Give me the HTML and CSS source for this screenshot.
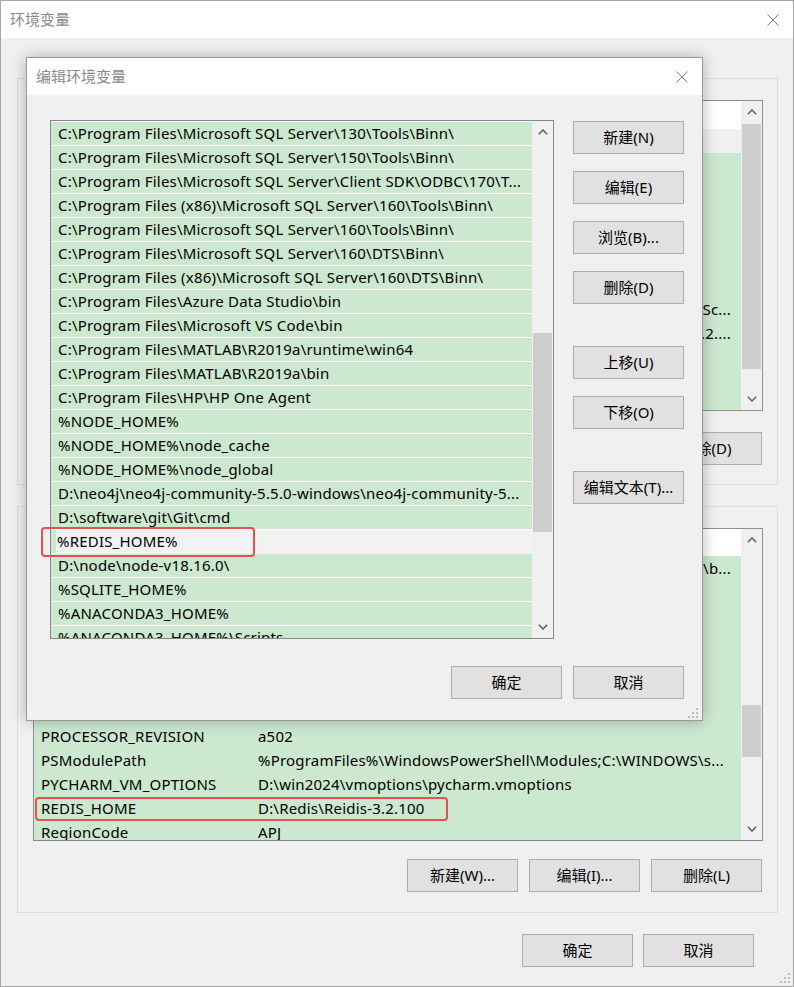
FILE: index.html
```html
<!DOCTYPE html>
<html lang="zh-CN">
<head>
<meta charset="utf-8">
<title>环境变量</title>
<link rel="stylesheet" href="styles.css">
</head>
<body>
<div class="win">
  <header class="titlebar">
    <span class="title">环境变量</span>
    <svg class="close" viewBox="0 0 12 12"><path d="M0.5 0.5L11.5 11.5M11.5 0.5L0.5 11.5"/></svg>
  </header>

  <main class="content">
    <section class="group">
      <div class="listview lv-user">
        <div class="lv-main">
          <div class="lv-head"><span>变量</span><span>值</span></div>
          <div class="lv-row sel"><span class="k">IntelliJ IDEA</span><span class="v">D:\IntelliJ IDEA 2023.2\bin;</span></div>
          <div class="lv-row"><span class="k">MOZ_PLUGIN_PATH</span><span class="v">C:\Program Files (x86)\Foxit\plugins\</span></div>
          <div class="lv-row"><span class="k">OneDrive</span><span class="v">C:\Users\HP\OneDrive</span></div>
          <div class="lv-row"><span class="k">OneDriveConsumer</span><span class="v">C:\Users\HP\OneDrive</span></div>
          <div class="lv-row"><span class="k">Path</span><span class="v">C:\Users\HP\AppData\Local\Microsoft\WindowsApps;</span></div>
          <div class="lv-row"><span class="k">PyCharm</span><span class="v">D:\PyCharm 2023.2\bin;</span></div>
          <div class="lv-row"><span class="k">PyCharm Community Edition</span><span class="v">D:\PyCharm CE 2023.2\bin;</span></div>
          <div class="lv-row"><span class="k">PYTHONPATH</span><span class="v tail">D:\Anaconda3;D:\Anaconda3\Library\bin;D:\Anaconda3\Sc...</span></div>
          <div class="lv-row"><span class="k">WebStorm</span><span class="v tail">D:\Program Files\JetBrains\WebStorm 2023.2....</span></div>
          <div class="lv-row"><span class="k">TEMP</span><span class="v">%USERPROFILE%\AppData\Local\Temp</span></div>
          <div class="lv-row"><span class="k">TMP</span><span class="v">%USERPROFILE%\AppData\Local\Temp</span></div>
          <div class="lv-row"><span class="k">ZES_ENABLE_SYSMAN</span><span class="v">1</span></div>
        </div>
        <div class="vscroll">
          <div class="sb-btn"><svg class="chev" viewBox="0 0 10 6"><polyline points="0.8,5.2 5,1 9.2,5.2"/></svg></div>
          <div class="sb-track"><div class="sb-thumb" style="margin-top:1px;height:245px"></div></div>
          <div class="sb-btn"><svg class="chev" viewBox="0 0 10 6"><polyline points="0.8,0.8 5,5 9.2,0.8"/></svg></div>
        </div>
      </div>
      <div class="btnrow">
        <button class="btn">新建(N)...</button>
        <button class="btn">编辑(E)...</button>
        <button class="btn">删除(D)</button>
      </div>
    </section>

    <section class="group">
      <div class="listview lv-sys">
        <div class="lv-main">
          <div class="lv-head"><span>变量</span><span>值</span></div>
          <div class="lv-row"><span class="k">NEO4J_HOME</span><span class="v tail">D:\neo4j\neo4j-community-5.5.0-windows\neo4j-5\b...</span></div>
          <div class="lv-row"><span class="k">NUMBER_OF_PROCESSORS</span><span class="v">16</span></div>
          <div class="lv-row"><span class="k">OS</span><span class="v">Windows_NT</span></div>
          <div class="lv-row"><span class="k">PATHEXT</span><span class="v">.COM;.EXE;.BAT;.CMD;.VBS;.JS;.WSF;.MSC</span></div>
          <div class="lv-row"><span class="k">PROCESSOR_ARCHITECTURE</span><span class="v">AMD64</span></div>
          <div class="lv-row"><span class="k">PROCESSOR_IDENTIFIER</span><span class="v">AMD64 Family 25 Model 80, AuthenticAMD</span></div>
          <div class="lv-row"><span class="k">PROCESSOR_LEVEL</span><span class="v">25</span></div>
          <div class="lv-row"><span class="k">PROCESSOR_REVISION</span><span class="v">a502</span></div>
          <div class="lv-row"><span class="k">PSModulePath</span><span class="v">%ProgramFiles%\WindowsPowerShell\Modules;C:\WINDOWS\s...</span></div>
          <div class="lv-row"><span class="k">PYCHARM_VM_OPTIONS</span><span class="v">D:\win2024\vmoptions\pycharm.vmoptions</span></div>
          <div class="lv-row"><span class="k">REDIS_HOME</span><span class="v">D:\Redis\Reidis-3.2.100</span></div>
          <div class="lv-row"><span class="k">RegionCode</span><span class="v">APJ</span></div>
        </div>
        <div class="vscroll">
          <div class="sb-btn"><svg class="chev" viewBox="0 0 10 6"><polyline points="0.8,5.2 5,1 9.2,5.2"/></svg></div>
          <div class="sb-track"><div class="sb-thumb" style="margin-top:154px;height:52px"></div></div>
          <div class="sb-btn"><svg class="chev" viewBox="0 0 10 6"><polyline points="0.8,0.8 5,5 9.2,0.8"/></svg></div>
        </div>
      </div>
      <div class="btnrow btnrow-sys">
        <button class="btn">新建(W)...</button>
        <button class="btn">编辑(I)...</button>
        <button class="btn">删除(L)</button>
      </div>
    </section>

    <div class="btnrow footer">
      <button class="btn">确定</button>
      <button class="btn">取消</button>
    </div>
  </main>

  <svg class="grip grip-win" viewBox="0 0 11 11"><rect x="8" y="0" width="2" height="2"/><rect x="4" y="4" width="2" height="2"/><rect x="8" y="4" width="2" height="2"/><rect x="0" y="8" width="2" height="2"/><rect x="4" y="8" width="2" height="2"/><rect x="8" y="8" width="2" height="2"/></svg>
  <div class="annot annot-sys"></div>

  <div class="dialog">
    <header class="dlg-title">
      <span class="title">编辑环境变量</span>
      <svg class="close" viewBox="0 0 12 12"><path d="M0.5 0.5L11.5 11.5M11.5 0.5L0.5 11.5"/></svg>
    </header>
    <div class="dlg-body">
      <div class="dlg-main">
        <div class="pathlist">
          <div class="pl-rows">
            <div class="pl-row">C:\Program Files\Microsoft SQL Server\130\Tools\Binn\</div>
            <div class="pl-row">C:\Program Files\Microsoft SQL Server\150\Tools\Binn\</div>
            <div class="pl-row">C:\Program Files\Microsoft SQL Server\Client SDK\ODBC\170\T...</div>
            <div class="pl-row">C:\Program Files (x86)\Microsoft SQL Server\160\Tools\Binn\</div>
            <div class="pl-row">C:\Program Files\Microsoft SQL Server\160\Tools\Binn\</div>
            <div class="pl-row">C:\Program Files\Microsoft SQL Server\160\DTS\Binn\</div>
            <div class="pl-row">C:\Program Files (x86)\Microsoft SQL Server\160\DTS\Binn\</div>
            <div class="pl-row">C:\Program Files\Azure Data Studio\bin</div>
            <div class="pl-row">C:\Program Files\Microsoft VS Code\bin</div>
            <div class="pl-row">C:\Program Files\MATLAB\R2019a\runtime\win64</div>
            <div class="pl-row">C:\Program Files\MATLAB\R2019a\bin</div>
            <div class="pl-row">C:\Program Files\HP\HP One Agent</div>
            <div class="pl-row">%NODE_HOME%</div>
            <div class="pl-row">%NODE_HOME%\node_cache</div>
            <div class="pl-row">%NODE_HOME%\node_global</div>
            <div class="pl-row">D:\neo4j\neo4j-community-5.5.0-windows\neo4j-community-5...</div>
            <div class="pl-row">D:\software\git\Git\cmd</div>
            <div class="pl-row editing">%REDIS_HOME%</div>
            <div class="pl-row">D:\node\node-v18.16.0\</div>
            <div class="pl-row">%SQLITE_HOME%</div>
            <div class="pl-row">%ANACONDA3_HOME%</div>
            <div class="pl-row">%ANACONDA3_HOME%\Scripts</div>
          </div>
          <div class="vscroll">
            <div class="sb-btn"><svg class="chev" viewBox="0 0 10 6"><polyline points="0.8,5.2 5,1 9.2,5.2"/></svg></div>
            <div class="sb-track"><div class="sb-thumb" style="margin-top:190px;height:199px"></div></div>
            <div class="sb-btn"><svg class="chev" viewBox="0 0 10 6"><polyline points="0.8,0.8 5,5 9.2,0.8"/></svg></div>
          </div>
        </div>
        <div class="side">
          <button class="btn">新建(N)</button>
          <button class="btn">编辑(E)</button>
          <button class="btn">浏览(B)...</button>
          <button class="btn">删除(D)</button>
          <button class="btn sep">上移(U)</button>
          <button class="btn">下移(O)</button>
          <button class="btn sep">编辑文本(T)...</button>
        </div>
      </div>
      <div class="btnrow dlg-foot">
        <button class="btn">确定</button>
        <button class="btn">取消</button>
      </div>
    </div>
    <svg class="grip grip-dlg" viewBox="0 0 11 11"><rect x="8" y="0" width="2" height="2"/><rect x="4" y="4" width="2" height="2"/><rect x="8" y="4" width="2" height="2"/><rect x="0" y="8" width="2" height="2"/><rect x="4" y="8" width="2" height="2"/><rect x="8" y="8" width="2" height="2"/></svg>
    <div class="annot annot-dlg"></div>
  </div>
</div>
</body>
</html>
```

FILE: styles.css
```css
* { box-sizing: border-box; }

html, body { margin: 0; padding: 0; }

body {
  font-family: "Noto Sans", "Noto Sans CJK SC", sans-serif;
  font-size: 15px;
  color: #000;
  background: #f0f0f0;
}

.win {
  position: relative;
  width: 794px;
  height: 987px;
  border: 1px solid #a6a6a6;
  background: #f0f0f0;
  overflow: hidden;
}

.titlebar {
  height: 37px;
  background: #fff;
  display: flex;
  align-items: center;
  padding: 0 14px 0 9px;
}

.title {
  color: #8a8a8a;
  font-family: "Noto Sans CJK SC", sans-serif;
  font-size: 15px;
  line-height: 1;
  margin-top: -2px;
}

.close {
  margin-left: auto;
  width: 12px;
  height: 12px;
  fill: none;
  stroke: #7a7a7a;
  stroke-width: 1;
}

.content {
  padding: 0 15px 0 16px;
}

.group {
  border: 1px solid #dcdcdc;
  margin-top: 40px;
  padding: 21px 14px 19px 15px;
}

.group + .group {
  margin-top: 21px;
  padding-bottom: 20px;
}

.listview {
  display: flex;
  border: 1px solid #8a948c;
  background: #cce8cf;
  overflow: hidden;
}

.lv-user { height: 311px; }
.lv-sys { height: 313px; border-bottom-color: #828790; }

.lv-main {
  flex: 1;
  min-width: 0;
  overflow: hidden;
}

.lv-head {
  height: 28px;
  background: #fff;
  display: grid;
  grid-template-columns: 217px 1fr;
  padding-left: 7px;
  align-items: center;
}

.lv-sys .lv-head { height: 27px; }

.lv-row {
  height: 24px;
  display: grid;
  grid-template-columns: 217px 1fr;
  padding-left: 7px;
  align-items: center;
  white-space: nowrap;
  letter-spacing: 0.2px;
}

.lv-row span { overflow: hidden; }

.lv-row.sel { background: #f0f0f0; }

.v.tail {
  text-align: right;
  padding-right: 10px;
}

.vscroll {
  width: 21px;
  flex: none;
  display: flex;
  flex-direction: column;
  background: #f0f0f0;
}

.sb-btn {
  height: 22px;
  flex: none;
  display: flex;
  align-items: center;
  justify-content: center;
}

.sb-track { flex: 1; }

.sb-thumb {
  background: #cdcdcd;
  margin-left: 1px;
  margin-right: 1px;
}

.chev {
  width: 10px;
  height: 6px;
  fill: none;
  stroke: #606060;
  stroke-width: 1.5;
}

.btnrow {
  display: flex;
  justify-content: flex-end;
  gap: 11px;
  margin-top: 21px;
  padding-right: 1px;
}

.btnrow-sys { margin-top: 18px; }

.footer {
  margin-top: 21px;
  gap: 10px;
  padding-right: 24px;
}

.btn {
  width: 111px;
  height: 33px;
  border: 1px solid #adadad;
  background: #e1e1e1;
  font-family: "Noto Sans", "Noto Sans CJK SC", sans-serif;
  font-size: 15px;
  color: #000;
  padding: 0 0 2px;
  display: flex;
  align-items: center;
  justify-content: center;
}

.grip {
  position: absolute;
  width: 11px;
  height: 11px;
  fill: #bdbdbd;
}

.grip-win { right: 2px; bottom: 2px; }
.grip-dlg { right: 3px; bottom: 1px; }

.annot {
  position: absolute;
  border: 2px solid #e65050;
  border-radius: 4px;
}

.annot-sys { left: 34px; top: 796px; width: 413px; height: 24px; }
.annot-dlg { left: 14px; top: 469px; width: 214px; height: 30px; }

/* dialog */
.dialog {
  position: absolute;
  left: 25px;
  top: 56px;
  width: 677px;
  height: 664px;
  border: 1px solid #9a9a9a;
  background: #f0f0f0;
  box-shadow: 0 0 14px rgba(0, 0, 0, 0.28);
}

.dlg-title {
  height: 37px;
  background: #fff;
  display: flex;
  align-items: center;
  padding: 0 14px 0 9px;
}

.dlg-body {
  padding: 25px 18px 21px 23px;
}

.dlg-main {
  display: grid;
  grid-template-columns: 504px 111px;
  column-gap: 19px;
  align-items: start;
}

.pathlist {
  height: 519px;
  border: 1px solid #828790;
  background: #fff;
  display: flex;
}

.pl-rows {
  flex: 1;
  min-width: 0;
  padding-top: 1px;
  overflow: hidden;
}

.pl-row {
  height: 24px;
  border-bottom: 1px solid #fff;
  background: #cce8cf;
  padding-left: 7px;
  line-height: 23px;
  white-space: nowrap;
  overflow: hidden;
  letter-spacing: 0.2px;
}

.pl-row.editing {
  background: linear-gradient(to right, #cce8cf 5px, #f2f2f2 5px);
  border-bottom-color: #f2f2f2;
  padding-left: 6px;
}

.side {
  display: flex;
  flex-direction: column;
  padding-top: 1px;
}

.side .btn + .btn { margin-top: 17px; }
.side .btn.sep { margin-top: 42px; }

.dlg-foot {
  margin-top: 27px;
  padding-right: 0;
}
```
